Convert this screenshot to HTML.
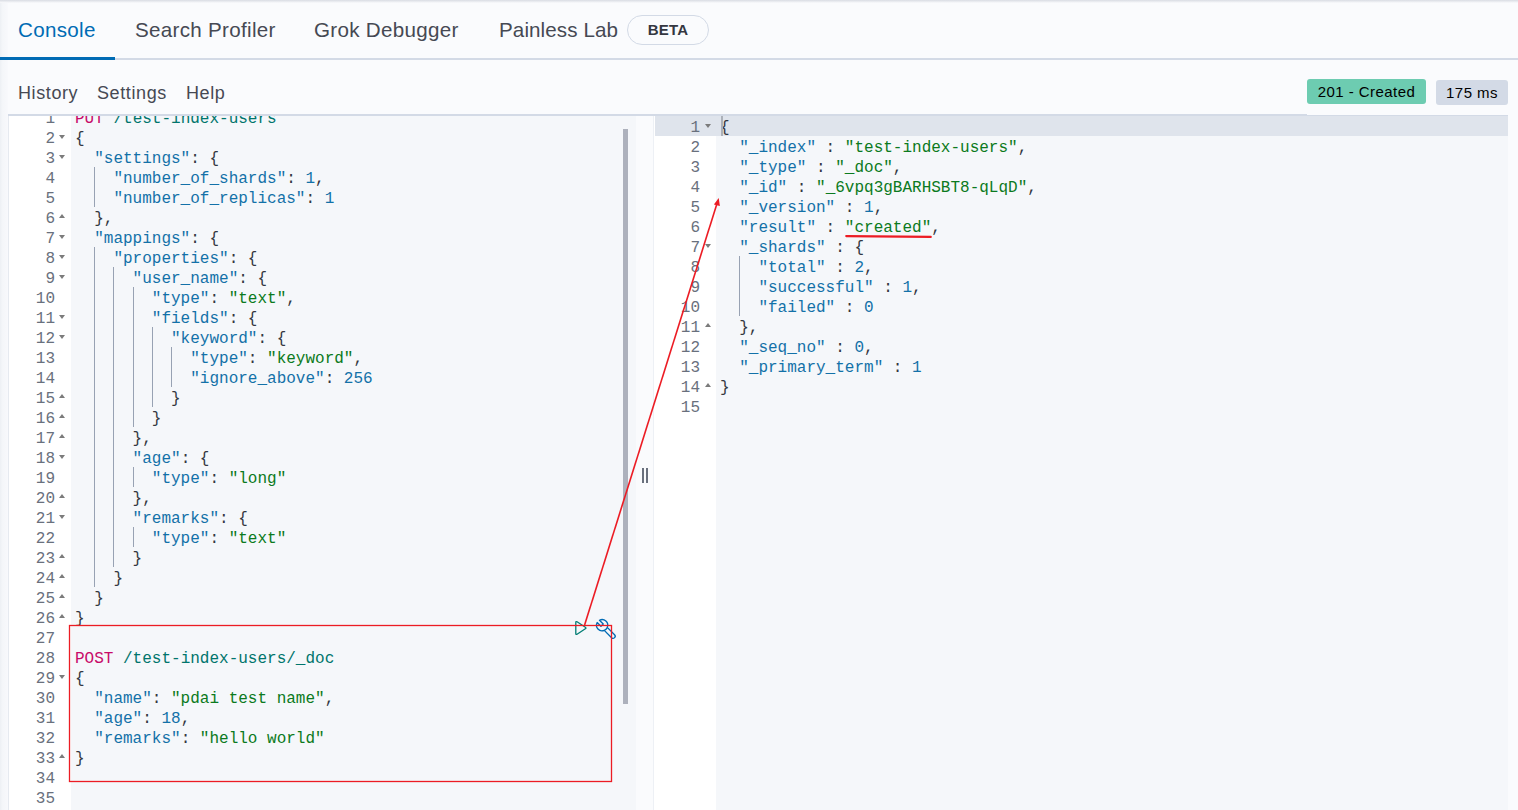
<!DOCTYPE html>
<html><head><meta charset="utf-8">
<style>
*{margin:0;padding:0;box-sizing:border-box}
html,body{width:1518px;height:810px;overflow:hidden;background:#FAFBFD;font-family:"Liberation Sans",sans-serif;color:#343741}
.abs{position:absolute}
.topshadow{left:0;top:0;width:1518px;height:3px;background:linear-gradient(#D9DCE3,#FAFBFD)}
.tab{position:absolute;top:18px;font-size:20.6px;line-height:24px;letter-spacing:0.3px;white-space:nowrap;color:#464953}
.tab.sel{color:#006BB4}
.tabline{left:0;top:58px;width:1518px;height:2px;background:#D3DAE6}
.tabsel{left:0;top:57px;width:115px;height:3px;background:#006BB4}
.beta{left:627px;top:15px;width:82px;height:30px;border:1px solid #D3DAE6;border-radius:15px;font-size:15px;font-weight:bold;letter-spacing:0.2px;text-align:center;line-height:28px;color:#343741}
.menu{position:absolute;top:82px;font-size:18px;line-height:22px;letter-spacing:0.6px;white-space:nowrap;color:#464953}
.badge{position:absolute;font-size:15px;letter-spacing:0.45px;white-space:nowrap;color:#000;text-align:center;border-radius:3px}
.panel{position:absolute;top:114px;height:696px;border-top:2px solid #D3DAE6;overflow:hidden}
.gutter{position:absolute;top:0;bottom:0;background:#fff}
.code{position:absolute;top:0;bottom:0;background:#F5F7FA}
.ln{position:absolute;font-family:"Liberation Mono",monospace;font-size:16px;line-height:20px;color:#69707D;text-align:right;white-space:pre}
.line{position:absolute;font-family:"Liberation Mono",monospace;font-size:16px;line-height:20px;color:#343741;white-space:pre}
.k{color:#1371A8}
.s{color:#0B7A20}
.n{color:#1371A8}
.m{color:#C80A68}
.u{color:#00756C}
.p{color:#343741}
.fold{position:absolute;width:0;height:0;border-left:3px solid transparent;border-right:3px solid transparent}
.fd{border-top:4px solid #7B7B7B}
.fu{border-bottom:4px solid #7B7B7B}
.guide{position:absolute;width:1px;background:#98A2B3}
</style></head><body>
<div class="abs" style="left:0;top:0;width:8px;height:810px;background:linear-gradient(90deg,#EDF0F4,#F4F6F9 30%,#F8F9FC)"></div>
<div class="abs topshadow"></div>
<div class="tab sel" style="left:18px">Console</div>
<div class="tab" style="left:135px">Search Profiler</div>
<div class="tab" style="left:314px">Grok Debugger</div>
<div class="tab" style="left:499px;letter-spacing:0.1px">Painless Lab</div>
<div class="abs beta">BETA</div>
<div class="abs tabline"></div>
<div class="abs tabsel"></div>

<div class="menu" style="left:18px">History</div>
<div class="menu" style="left:97px">Settings</div>
<div class="menu" style="left:186px">Help</div>

<div class="badge" style="left:1307px;top:79px;width:119px;height:25px;line-height:25px;background:#6DCCB1">201 - Created</div>
<div class="badge" style="left:1436px;top:80px;width:72px;height:25px;line-height:25px;background:#D3DAE6">175 ms</div>

<!-- LEFT PANEL -->
<div class="panel" id="left" style="left:8px;width:646px;">
<div class="gutter" style="left:1px;width:62px"></div>
<div class="code" style="left:63px;right:18px"></div>
<div class="guide" style="left:86.2px;top:51px;height:40px"></div>
<div class="guide" style="left:86.2px;top:131px;height:340px"></div>
<div class="guide" style="left:105.4px;top:151px;height:300px"></div>
<div class="guide" style="left:124.6px;top:171px;height:140px"></div>
<div class="guide" style="left:124.6px;top:351px;height:20px"></div>
<div class="guide" style="left:124.6px;top:411px;height:20px"></div>
<div class="guide" style="left:143.8px;top:211px;height:80px"></div>
<div class="guide" style="left:163.0px;top:231px;height:40px"></div>
<div class="ln" style="right:599px;top:-7px">1</div>
<div class="line" style="left:67px;top:-7px"><span class="m">PUT</span> <span class="u">/test-index-users</span></div>
<div class="ln" style="right:599px;top:13px">2</div>
<div class="fold fd" style="left:51px;top:19px"></div>
<div class="line" style="left:67px;top:13px">{</div>
<div class="ln" style="right:599px;top:33px">3</div>
<div class="fold fd" style="left:51px;top:39px"></div>
<div class="line" style="left:67px;top:33px">  <span class="k">&quot;settings&quot;</span>: {</div>
<div class="ln" style="right:599px;top:53px">4</div>
<div class="line" style="left:67px;top:53px">    <span class="k">&quot;number_of_shards&quot;</span>: <span class="n">1</span>,</div>
<div class="ln" style="right:599px;top:73px">5</div>
<div class="line" style="left:67px;top:73px">    <span class="k">&quot;number_of_replicas&quot;</span>: <span class="n">1</span></div>
<div class="ln" style="right:599px;top:93px">6</div>
<div class="fold fu" style="left:51px;top:98px"></div>
<div class="line" style="left:67px;top:93px">  },</div>
<div class="ln" style="right:599px;top:113px">7</div>
<div class="fold fd" style="left:51px;top:119px"></div>
<div class="line" style="left:67px;top:113px">  <span class="k">&quot;mappings&quot;</span>: {</div>
<div class="ln" style="right:599px;top:133px">8</div>
<div class="fold fd" style="left:51px;top:139px"></div>
<div class="line" style="left:67px;top:133px">    <span class="k">&quot;properties&quot;</span>: {</div>
<div class="ln" style="right:599px;top:153px">9</div>
<div class="fold fd" style="left:51px;top:159px"></div>
<div class="line" style="left:67px;top:153px">      <span class="k">&quot;user_name&quot;</span>: {</div>
<div class="ln" style="right:599px;top:173px">10</div>
<div class="line" style="left:67px;top:173px">        <span class="k">&quot;type&quot;</span>: <span class="s">&quot;text&quot;</span>,</div>
<div class="ln" style="right:599px;top:193px">11</div>
<div class="fold fd" style="left:51px;top:199px"></div>
<div class="line" style="left:67px;top:193px">        <span class="k">&quot;fields&quot;</span>: {</div>
<div class="ln" style="right:599px;top:213px">12</div>
<div class="fold fd" style="left:51px;top:219px"></div>
<div class="line" style="left:67px;top:213px">          <span class="k">&quot;keyword&quot;</span>: {</div>
<div class="ln" style="right:599px;top:233px">13</div>
<div class="line" style="left:67px;top:233px">            <span class="k">&quot;type&quot;</span>: <span class="s">&quot;keyword&quot;</span>,</div>
<div class="ln" style="right:599px;top:253px">14</div>
<div class="line" style="left:67px;top:253px">            <span class="k">&quot;ignore_above&quot;</span>: <span class="n">256</span></div>
<div class="ln" style="right:599px;top:273px">15</div>
<div class="fold fu" style="left:51px;top:278px"></div>
<div class="line" style="left:67px;top:273px">          }</div>
<div class="ln" style="right:599px;top:293px">16</div>
<div class="fold fu" style="left:51px;top:298px"></div>
<div class="line" style="left:67px;top:293px">        }</div>
<div class="ln" style="right:599px;top:313px">17</div>
<div class="fold fu" style="left:51px;top:318px"></div>
<div class="line" style="left:67px;top:313px">      },</div>
<div class="ln" style="right:599px;top:333px">18</div>
<div class="fold fd" style="left:51px;top:339px"></div>
<div class="line" style="left:67px;top:333px">      <span class="k">&quot;age&quot;</span>: {</div>
<div class="ln" style="right:599px;top:353px">19</div>
<div class="line" style="left:67px;top:353px">        <span class="k">&quot;type&quot;</span>: <span class="s">&quot;long&quot;</span></div>
<div class="ln" style="right:599px;top:373px">20</div>
<div class="fold fu" style="left:51px;top:378px"></div>
<div class="line" style="left:67px;top:373px">      },</div>
<div class="ln" style="right:599px;top:393px">21</div>
<div class="fold fd" style="left:51px;top:399px"></div>
<div class="line" style="left:67px;top:393px">      <span class="k">&quot;remarks&quot;</span>: {</div>
<div class="ln" style="right:599px;top:413px">22</div>
<div class="line" style="left:67px;top:413px">        <span class="k">&quot;type&quot;</span>: <span class="s">&quot;text&quot;</span></div>
<div class="ln" style="right:599px;top:433px">23</div>
<div class="fold fu" style="left:51px;top:438px"></div>
<div class="line" style="left:67px;top:433px">      }</div>
<div class="ln" style="right:599px;top:453px">24</div>
<div class="fold fu" style="left:51px;top:458px"></div>
<div class="line" style="left:67px;top:453px">    }</div>
<div class="ln" style="right:599px;top:473px">25</div>
<div class="fold fu" style="left:51px;top:478px"></div>
<div class="line" style="left:67px;top:473px">  }</div>
<div class="ln" style="right:599px;top:493px">26</div>
<div class="fold fu" style="left:51px;top:498px"></div>
<div class="line" style="left:67px;top:493px">}</div>
<div class="ln" style="right:599px;top:513px">27</div>
<div class="ln" style="right:599px;top:533px">28</div>
<div class="line" style="left:67px;top:533px"><span class="m">POST</span> <span class="u">/test-index-users/_doc</span></div>
<div class="ln" style="right:599px;top:553px">29</div>
<div class="fold fd" style="left:51px;top:559px"></div>
<div class="line" style="left:67px;top:553px">{</div>
<div class="ln" style="right:599px;top:573px">30</div>
<div class="line" style="left:67px;top:573px">  <span class="k">&quot;name&quot;</span>: <span class="s">&quot;pdai test name&quot;</span>,</div>
<div class="ln" style="right:599px;top:593px">31</div>
<div class="line" style="left:67px;top:593px">  <span class="k">&quot;age&quot;</span>: <span class="n">18</span>,</div>
<div class="ln" style="right:599px;top:613px">32</div>
<div class="line" style="left:67px;top:613px">  <span class="k">&quot;remarks&quot;</span>: <span class="s">&quot;hello world&quot;</span></div>
<div class="ln" style="right:599px;top:633px">33</div>
<div class="fold fu" style="left:51px;top:638px"></div>
<div class="line" style="left:67px;top:633px">}</div>
<div class="ln" style="right:599px;top:653px">34</div>
<div class="ln" style="right:599px;top:673px">35</div>
</div>

<!-- RIGHT PANEL -->
<div class="panel" id="right" style="left:654px;width:854px;">
<div class="gutter" style="left:0px;width:62px"></div>
<div class="code" style="left:62px;right:0px"></div>
<div class="abs" style="left:1px;top:0px;right:0;height:20px;background:#DFE4EC"></div>
<div class="guide" style="left:85.2px;top:140px;height:60px"></div>
<div class="ln" style="right:808px;top:2px">1</div>
<div class="fold fd" style="left:51px;top:8px"></div>
<div class="line" style="left:66px;top:2px">{</div>
<div class="ln" style="right:808px;top:22px">2</div>
<div class="line" style="left:66px;top:22px">  <span class="k">&quot;_index&quot;</span> : <span class="s">&quot;test-index-users&quot;</span>,</div>
<div class="ln" style="right:808px;top:42px">3</div>
<div class="line" style="left:66px;top:42px">  <span class="k">&quot;_type&quot;</span> : <span class="s">&quot;_doc&quot;</span>,</div>
<div class="ln" style="right:808px;top:62px">4</div>
<div class="line" style="left:66px;top:62px">  <span class="k">&quot;_id&quot;</span> : <span class="s">&quot;_6vpq3gBARHSBT8-qLqD&quot;</span>,</div>
<div class="ln" style="right:808px;top:82px">5</div>
<div class="line" style="left:66px;top:82px">  <span class="k">&quot;_version&quot;</span> : <span class="n">1</span>,</div>
<div class="ln" style="right:808px;top:102px">6</div>
<div class="line" style="left:66px;top:102px">  <span class="k">&quot;result&quot;</span> : <span class="s">&quot;created&quot;</span>,</div>
<div class="ln" style="right:808px;top:122px">7</div>
<div class="fold fd" style="left:51px;top:128px"></div>
<div class="line" style="left:66px;top:122px">  <span class="k">&quot;_shards&quot;</span> : {</div>
<div class="ln" style="right:808px;top:142px">8</div>
<div class="line" style="left:66px;top:142px">    <span class="k">&quot;total&quot;</span> : <span class="n">2</span>,</div>
<div class="ln" style="right:808px;top:162px">9</div>
<div class="line" style="left:66px;top:162px">    <span class="k">&quot;successful&quot;</span> : <span class="n">1</span>,</div>
<div class="ln" style="right:808px;top:182px">10</div>
<div class="line" style="left:66px;top:182px">    <span class="k">&quot;failed&quot;</span> : <span class="n">0</span></div>
<div class="ln" style="right:808px;top:202px">11</div>
<div class="fold fu" style="left:51px;top:207px"></div>
<div class="line" style="left:66px;top:202px">  },</div>
<div class="ln" style="right:808px;top:222px">12</div>
<div class="line" style="left:66px;top:222px">  <span class="k">&quot;_seq_no&quot;</span> : <span class="n">0</span>,</div>
<div class="ln" style="right:808px;top:242px">13</div>
<div class="line" style="left:66px;top:242px">  <span class="k">&quot;_primary_term&quot;</span> : <span class="n">1</span></div>
<div class="ln" style="right:808px;top:262px">14</div>
<div class="fold fu" style="left:51px;top:267px"></div>
<div class="line" style="left:66px;top:262px">}</div>
<div class="ln" style="right:808px;top:282px">15</div>
</div>


<!-- left border / divider -->
<div class="abs" style="left:8px;top:116px;width:1px;height:694px;background:#E6EAF0"></div>
<div class="abs" style="left:653px;top:116px;width:1px;height:694px;background:#EDF0F5"></div>
<div class="abs" style="left:623px;top:129px;width:5px;height:575px;background:#ADB1BC"></div>
<div class="abs" style="left:642px;top:468px;width:2px;height:15px;background:#69707D"></div>
<div class="abs" style="left:646px;top:468px;width:2px;height:15px;background:#69707D"></div>
<div class="abs" style="left:1307px;top:114px;width:201px;height:1px;background:#FAFBFD"></div>
<!-- cursor -->
<div class="abs" style="left:721px;top:116px;width:2px;height:20px;background:#ACB1B9"></div>
<!-- action icons -->
<svg class="abs" style="left:570px;top:615px" width="50" height="30" viewBox="570 615 50 30">
  <path d="M575.8 622.5 Q575.8 621 577.06 621.82 L585.34 627.18 Q586.6 628 585.34 628.82 L577.06 634.18 Q575.8 635 575.8 633.5 Z" fill="none" stroke="#017D73" stroke-width="1.3" stroke-linejoin="round"/>
  <path d="M603.25 624.05 L599.46 620.26 A5.6 5.6 0 0 1 607.25 627.39 L614.55 634.68 A2.1 2.1 0 0 1 611.58 637.65 L604.29 630.36 A5.6 5.6 0 0 1 597.16 622.56 L600.95 626.35 Z M607.25 627.39 A5.6 5.6 0 0 1 604.29 630.36" fill="none" stroke="#006BB4" stroke-width="1.35" stroke-linejoin="round"/>
</svg>
<!-- annotations -->
<svg class="abs" style="left:0;top:0" width="1518" height="810">
  <rect x="69.5" y="625.5" width="542" height="156" fill="none" stroke="#EC1C24" stroke-width="1.3"/>
  <line x1="584.6" y1="625" x2="716.7" y2="204.5" stroke="#EC1C24" stroke-width="1.6"/>
  <path d="M718.7 198 L713.9 204.6 L719.9 205.9 Z" fill="#EC1C24"/>
  <path d="M846.2 236.1 L930.8 236.9" stroke="#EC1C24" stroke-width="2.1" stroke-linecap="round"/>
</svg>
</body></html>
